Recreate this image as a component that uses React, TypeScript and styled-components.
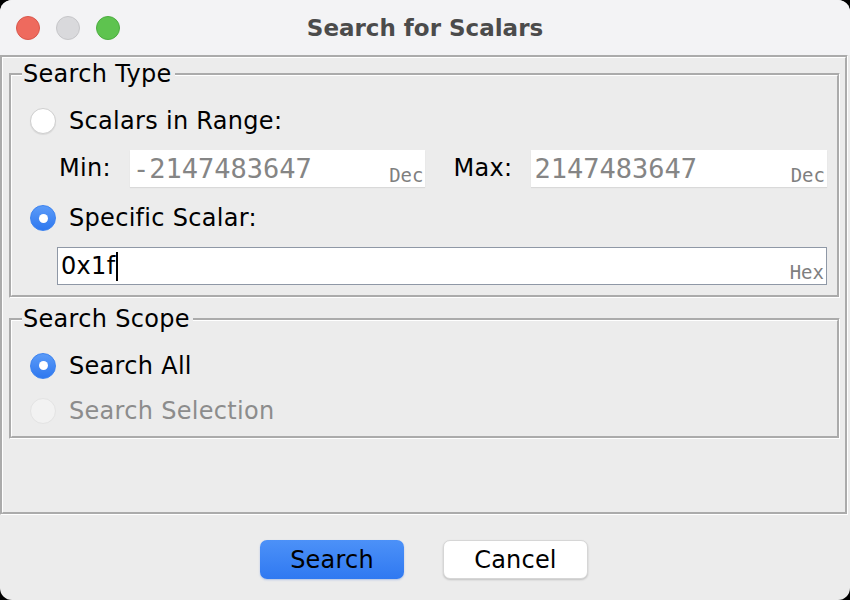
import React from "react";
import styled, { createGlobalStyle } from "styled-components";

const Global = createGlobalStyle`
  html, body { margin: 0; padding: 0; background: #000; }
  body { width: 850px; height: 600px; overflow: hidden; font-family: "DejaVu Sans", "Open Sans", sans-serif; }
  #root { width: 850px; height: 600px; }
`;

const Window = styled.div`
  width: 850px;
  height: 600px;
  background: #ececec;
  border-radius: 12px;
  overflow: hidden;
  display: flex;
  flex-direction: column;
`;

const TitleBar = styled.div`
  height: 55px;
  flex: none;
  background: #f3f3f5;
  display: grid;
  grid-template-columns: 1fr auto 1fr;
  align-items: center;
`;

const Lights = styled.div`
  display: flex;
  gap: 16px;
  padding-left: 16px;
`;

const Light = styled.span<{ $c: string; $b: string }>`
  width: 24px;
  height: 24px;
  border-radius: 50%;
  box-sizing: border-box;
  background: ${(p) => p.$c};
  border: 1px solid ${(p) => p.$b};
`;

const Title = styled.div`
  font-size: 23px;
  font-weight: 700;
  color: #4b4b4b;
`;

const Body = styled.div`
  flex: 1;
  display: flex;
  flex-direction: column;
`;

const OuterPanel = styled.div`
  height: 460px;
  box-sizing: border-box;
  margin: 0 2px 0 0;
  border: 3px groove #fff;
  padding: 0 5px 0 6px;
  display: flex;
  flex-direction: column;
`;

const Group = styled.fieldset<{ $pt: number; $pb: number }>`
  margin: 0;
  box-sizing: border-box;
  border: 3px groove #fff;
  padding: ${(p) => p.$pt}px 10px ${(p) => p.$pb}px 18px;
  display: flex;
  flex-direction: column;
`;

const Legend = styled.legend`
  font-size: 24px;
  letter-spacing: 0.3px;
  line-height: 28px;
  color: #000;
  padding: 0 3px 0 1px;
  margin-left: -8px;
`;

const RadioRow = styled.label<{ $disabled?: boolean; $h: number }>`
  display: flex;
  align-items: center;
  gap: 13px;
  height: ${(p) => p.$h}px;
  font-size: 24px;
  letter-spacing: 0.3px;
  color: ${(p) => (p.$disabled ? "#8c8c8c" : "#000")};
`;

const Radio = styled.span<{ $on?: boolean; $disabled?: boolean }>`
  width: 26px;
  height: 26px;
  box-sizing: border-box;
  border-radius: 50%;
  display: flex;
  align-items: center;
  justify-content: center;
  flex: none;
  background: ${(p) =>
    p.$on ? "linear-gradient(#5b9bf8, #2f78ef)" : p.$disabled ? "#f2f2f2" : "#fff"};
  border: 1px solid ${(p) => (p.$on ? "#3b82f0" : p.$disabled ? "#e3e3e3" : "#cfcfcf")};
  box-shadow: ${(p) => (p.$on || p.$disabled ? "none" : "0 1px 1px rgba(0,0,0,0.08)")};
  &::after {
    content: "";
    display: ${(p) => (p.$on ? "block" : "none")};
    width: 9px;
    height: 9px;
    border-radius: 50%;
    background: #fff;
  }
`;

const RangeRow = styled.div`
  display: flex;
  align-items: center;
  height: 46px;
`;

const FieldLabel = styled.span<{ $gap: number }>`
  font-size: 24px;
  letter-spacing: 0.3px;
  color: #000;
  margin-left: ${(p) => p.$gap}px;
  margin-right: 19px;
`;

const NumField = styled.div<{ $border?: boolean }>`
  flex: 1;
  height: ${(p) => (p.$border ? 38 : 37)}px;
  box-sizing: border-box;
  background: #fff;
  display: flex;
  align-items: center;
  justify-content: space-between;
  padding: 0 2px 0 3px;
  border: ${(p) => (p.$border ? "1px solid #8f98a6" : "none")};
  box-shadow: ${(p) => (p.$border ? "none" : "0 1px 1px rgba(0,0,0,0.08)")};
`;

const MonoValue = styled.span`
  font-family: "DejaVu Sans Mono", monospace;
  font-size: 27px;
  color: #858585;
`;

const TextValue = styled.span`
  font-size: 24px;
  letter-spacing: 0.3px;
  color: #000;
  display: flex;
  align-items: center;
`;

const Caret = styled.span`
  display: inline-block;
  width: 2px;
  height: 29px;
  background: #000;
  margin-left: 1px;
`;

const Radix = styled.span`
  font-family: "DejaVu Sans Mono", monospace;
  font-size: 19px;
  color: #7f7f7f;
  align-self: flex-end;
  line-height: 24px;
`;

const HexWrap = styled.div`
  display: flex;
  padding: 2px 0 0 27px;
`;

const Spacer = styled.div<{ $h: number }>`
  height: ${(p) => p.$h}px;
  flex: none;
`;

const ButtonRow = styled.div`
  flex: 1;
  display: flex;
  justify-content: center;
  align-items: center;
  gap: 39px;
  padding: 4px 2px 0 0;
`;

const Button = styled.button<{ $primary?: boolean }>`
  width: ${(p) => (p.$primary ? 144 : 145)}px;
  height: 39px;
  border-radius: 7px;
  font-family: "DejaVu Sans", "Open Sans", sans-serif;
  font-size: 24px;
  letter-spacing: 0.2px;
  color: #000;
  border: ${(p) => (p.$primary ? "none" : "1px solid #d6d6d6")};
  background: ${(p) => (p.$primary ? "linear-gradient(#4c91f8, #3079f1)" : "#fff")};
  box-shadow: ${(p) =>
    p.$primary ? "0 1px 2px rgba(40,100,220,0.3)" : "0 1px 2px rgba(0,0,0,0.18)"};
  padding: 0;
`;

export default function App() {
  return (
    <>
      <Global />
      <Window>
        <TitleBar>
          <Lights>
            <Light $c="#ee6a5e" $b="#d9574c" />
            <Light $c="#d9d9dc" $b="#c6c6c9" />
            <Light $c="#5ec34f" $b="#4cad40" />
          </Lights>
          <Title>Search for Scalars</Title>
          <div />
        </TitleBar>
        <Body>
          <OuterPanel>
            <Spacer $h={2} />
            <Group $pt={9} $pb={10}>
              <Legend>Search Type</Legend>
              <RadioRow $h={48}>
                <Radio />
                Scalars in Range:
              </RadioRow>
              <RangeRow>
                <FieldLabel $gap={29}>Min:</FieldLabel>
                <NumField>
                  <MonoValue>-2147483647</MonoValue>
                  <Radix>Dec</Radix>
                </NumField>
                <FieldLabel $gap={28}>Max:</FieldLabel>
                <NumField>
                  <MonoValue>2147483647</MonoValue>
                  <Radix>Dec</Radix>
                </NumField>
              </RangeRow>
              <RadioRow $h={54}>
                <Radio $on />
                Specific Scalar:
              </RadioRow>
              <HexWrap>
                <NumField $border>
                  <TextValue>
                    0x1f
                    <Caret />
                  </TextValue>
                  <Radix>Hex</Radix>
                </NumField>
              </HexWrap>
            </Group>
            <Spacer $h={7} />
            <Group $pt={10} $pb={3}>
              <Legend>Search Scope</Legend>
              <RadioRow $h={45}>
                <Radio $on />
                Search All
              </RadioRow>
              <RadioRow $h={45} $disabled>
                <Radio $disabled />
                Search Selection
              </RadioRow>
            </Group>
          </OuterPanel>
          <ButtonRow>
            <Button $primary>Search</Button>
            <Button>Cancel</Button>
          </ButtonRow>
        </Body>
      </Window>
    </>
  );
}
